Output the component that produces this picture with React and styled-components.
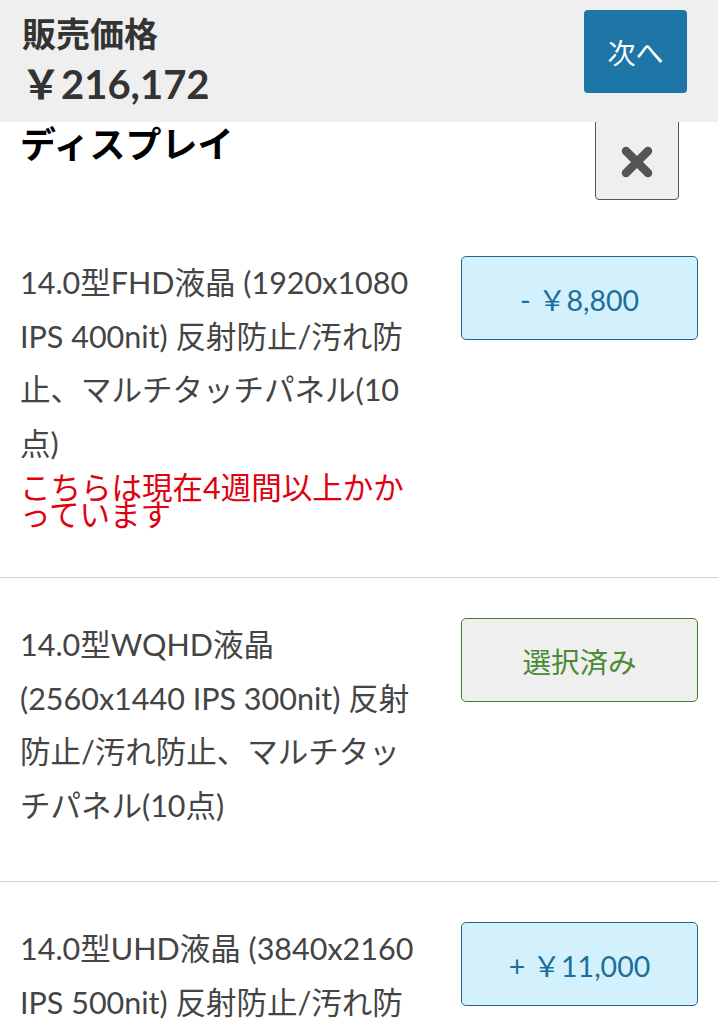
import styled, { createGlobalStyle } from 'styled-components'

const FONT = `Lato, "Noto Sans CJK JP", sans-serif`

const GlobalStyle = createGlobalStyle`
  body {
    margin: 0;
    background: #fff;
    font-family: ${FONT};
    color: #444;
  }
`

const Header = styled.header`
  position: fixed;
  top: 0;
  left: 0;
  right: 0;
  z-index: 10;
  height: 122px;
  box-sizing: border-box;
  padding: 10px 31px 0 22px;
  background: #efefef;
  display: flex;
  justify-content: space-between;
  align-items: flex-start;
`

const PriceBlock = styled.div`
  display: flex;
  flex-direction: column;
  color: #333;
  font-weight: 700;
`

const PriceLabel = styled.div`
  font-size: 34px;
  line-height: 48px;
`

const PriceValue = styled.div`
  font-size: 40px;
  line-height: 50px;
  margin-top: 1px;
  margin-left: -1px;
`

const NextButton = styled.button`
  width: 103px;
  height: 83px;
  border: none;
  border-radius: 4px;
  background: #1d76a6;
  color: #fff;
  font-family: ${FONT};
  font-size: 28px;
`

const Heading = styled.section`
  padding: 112px 39px 0 20px;
  height: 104px;
  display: flex;
  justify-content: space-between;
  align-items: flex-start;
`

const Title = styled.h2`
  margin: 11px 0 0;
  font-size: 36px;
  line-height: 42px;
  font-weight: 700;
  color: #000;
`

const CloseButton = styled.button`
  width: 84px;
  height: 88px;
  border: 1.5px solid #555;
  border-radius: 4px;
  background: #efefef;
  display: flex;
  align-items: center;
  justify-content: center;
  padding: 0;
  padding-top: 12px;
`

const Row = styled.div`
  display: grid;
  grid-template-columns: 405px 237px;
  column-gap: 36px;
  padding: 40px 20px 49px 20px;
  border-bottom: ${({ $last }) => ($last ? 'none' : '1.5px solid #d2d2d2')};
`

const Desc = styled.div`
  font-size: 30.5px;
  line-height: 53.5px;
  color: #444;
  line-break: loose;
`

const Notice = styled.div`
  font-size: 30.5px;
  line-height: 27px;
  color: #e00010;
  margin-top: 4px;
  line-break: anywhere;
`

const variants = {
  price: { bg: '#d2f1fd', border: '#23658e', color: '#1d6e99' },
  selected: { bg: '#efefef', border: '#3e7d2c', color: '#4b8b33' },
}

const OptionButton = styled.button`
  width: 100%;
  height: 84px;
  border-radius: 5px;
  border: 1.5px solid ${({ $variant }) => variants[$variant].border};
  background: ${({ $variant }) => variants[$variant].bg};
  color: ${({ $variant }) => variants[$variant].color};
  font-family: ${FONT};
  font-size: 28.5px;
  white-space: pre;
`

const CloseIcon = () => (
  <svg width="32" height="32" viewBox="0 0 32 32">
    <path
      d="M5 5 L27 27 M27 5 L5 27"
      stroke="#555"
      strokeWidth="8.5"
      strokeLinecap="round"
      fill="none"
    />
  </svg>
)

const options = [
  {
    text: '14.0型FHD液晶 (1920x1080 IPS 400nit) 反射防止/汚れ防止、マルチタッチパネル(10点)',
    notice: 'こちらは現在4週間以上かかっています',
    label: '- ￥8,800',
    variant: 'price',
  },
  {
    text: '14.0型WQHD液晶 (2560x1440 IPS 300nit) 反射防止/汚れ防止、マルチタッチパネル(10点)',
    label: '選択済み',
    variant: 'selected',
  },
  {
    text: '14.0型UHD液晶 (3840x2160 IPS 500nit) 反射防止/汚れ防止、マルチタッチパネル(10点)',
    label: '+ ￥11,000',
    variant: 'price',
  },
]

export default function App() {
  return (
    <>
      <GlobalStyle />
      <Header>
        <PriceBlock>
          <PriceLabel>販売価格</PriceLabel>
          <PriceValue>￥216,172</PriceValue>
        </PriceBlock>
        <NextButton>次へ</NextButton>
      </Header>
      <Heading>
        <Title>ディスプレイ</Title>
        <CloseButton aria-label="閉じる">
          <CloseIcon />
        </CloseButton>
      </Heading>
      {options.map((o, i) => (
        <Row key={i} $last={i === options.length - 1}>
          <Desc>
            {o.text}
            {o.notice && <Notice>{o.notice}</Notice>}
          </Desc>
          <div>
            <OptionButton $variant={o.variant}>{o.label}</OptionButton>
          </div>
        </Row>
      ))}
    </>
  )
}
